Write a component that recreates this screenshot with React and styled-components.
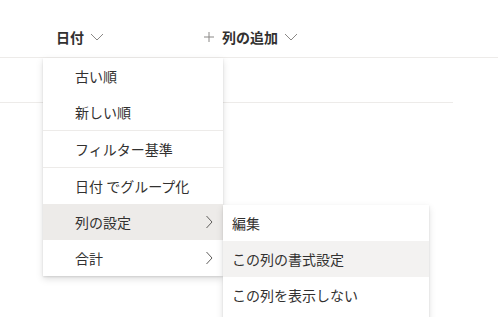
import React from 'react'
import styled, { createGlobalStyle } from 'styled-components';

const Global = createGlobalStyle`
body {
  margin: 0;
  background: #fff;
  font-family: "Noto Sans CJK JP", "Noto Sans", sans-serif;
  color: #323130;
}
`;

const Page = styled.div`
position: relative;
width: 498px;
height: 317px;
overflow: hidden;
`;

const Header = styled.div`
display: flex;
align-items: center;
height: 57px;
padding-left: 56px;
border-bottom: 1px solid #edebe9;
box-sizing: border-box;
padding-top: 16px;
height: 58px;
`;

const Column = styled.div`
display: flex;
align-items: center;
gap: 6px;
width: ${({ w }) => w}px;
font-size: 14px;
font-weight: 700;
color: #323130;
`;

const Row = styled.div`
width: 453px;
height: 44px;
border-bottom: 1px solid #edebe9;
`;

const Menu = styled.div`
position: absolute;
left: ${({ x }) => x}px;
top: ${({ y }) => y}px;
width: ${({ w }) => w}px;
padding-bottom: ${({ pb }) => pb || 0}px;
background: #fff;
box-shadow: 0 3.2px 7.2px rgba(0,0,0,0.13), 0 0.6px 1.8px rgba(0,0,0,0.11);
`;

const Item = styled.div`
display: flex;
align-items: center;
justify-content: space-between;
height: 36px;
padding: 0 10px 0 ${({ pad }) => pad}px;
font-size: 14px;
color: #323130;
background: ${({ bg }) => bg || '#fff'};
`;

const Divider = styled.div`
height: 1px;
background: #edebe9;
`;

const Down = () => (
  <svg width="14" height="8" viewBox="0 0 14 8">
    <path d="M1 1 L7 7 L13 1" fill="none" stroke="#8a8886" strokeWidth="1" />
  </svg>
);

const PlusIcon = () => (
  <svg width="10" height="10" viewBox="0 0 10 10" style={{ marginRight: 2 }}>
    <path d="M5 0 V10 M0 5 H10" fill="none" stroke="#8a8886" strokeWidth="1" />
  </svg>
);

const Right = () => (
  <svg width="8" height="14" viewBox="0 0 8 14">
    <path d="M1.5 1 L7 7 L1.5 13" fill="none" stroke="#605e5c" strokeWidth="1" />
  </svg>
);

const App = () => {
  return (
    <Page>
      <Global />
      <Header>
        <Column w={148}>日付 <Down /></Column>
        <Column w={160}><PlusIcon />列の追加 <Down /></Column>
      </Header>
      <Row />
      <Menu x={43} y={58} w={180}>
        <Item pad={32}>古い順</Item>
        <Item pad={32}>新しい順</Item>
        <Divider />
        <Item pad={32}>フィルター基準</Item>
        <Divider />
        <Item pad={32}>日付 でグループ化</Item>
        <Item pad={32} bg="#edebe9">列の設定 <Right /></Item>
        <Item pad={32}>合計 <Right /></Item>
      </Menu>
      <Menu x={223} y={205} w={206} pb={12}>
        <Item pad={9}>編集</Item>
        <Item pad={9} bg="#f3f2f1">この列の書式設定</Item>
        <Item pad={9}>この列を表示しない</Item>
      </Menu>
    </Page>
  )
}

export default App
